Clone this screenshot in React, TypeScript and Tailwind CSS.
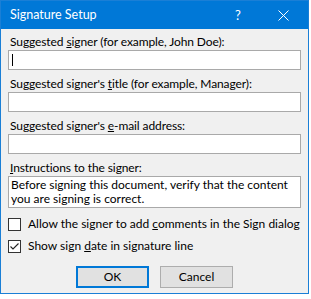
import React from "react";

const font = { fontFamily: 'Lato, "Noto Sans", sans-serif' };

function Label({ children }: { children: React.ReactNode }) {
  return <div className="text-[12px] leading-[14px] text-black pl-[2px] whitespace-nowrap tracking-[-0.1px]">{children}</div>;
}

function Field({ cursor = false }: { cursor?: boolean }) {
  return (
    <div className="mt-[1px] h-[20px] w-full border border-[#a9a9a9] bg-white relative">
      {cursor && <span className="absolute left-[3px] top-[3px] w-[1px] h-[12px] bg-black" />}
    </div>
  );
}

function Check({ checked }: { checked: boolean }) {
  return (
    <div className="w-[13px] h-[13px] border border-[#333333] bg-white flex items-center justify-center shrink-0">
      {checked && (
        <svg width="11" height="11" viewBox="0 0 11 11">
          <path d="M1.5 5.5 L4 8 L9.5 2.5" stroke="#222" strokeWidth="1.1" fill="none" />
        </svg>
      )}
    </div>
  );
}

export default function App() {
  return (
    <div className="w-[311px] h-[299px] bg-white" style={font}>
      <div className="w-[309px] h-[294px] border border-[#1a7fd6] bg-[#f0f0f0] flex flex-col">
        <div className="h-[28px] bg-[#0078d7] flex items-center text-white shrink-0">
          <div className="pl-[9px] text-[12.5px] leading-[16px] mt-[-1px] flex-1">Signature Setup</div>
          <div className="w-[14px] text-[13px] leading-[16px] mr-[33px] mt-[-1px] text-center">?</div>
          <svg width="11" height="11" viewBox="0 0 11 11" className="mr-[19px]">
            <path d="M0.5 0.5 L10.5 10.5 M10.5 0.5 L0.5 10.5" stroke="white" strokeWidth="1" />
          </svg>
        </div>
        <div className="flex-1 px-[7px] pt-[6px] flex flex-col">
          <Label>
            Suggested <span className="underline">s</span>igner (for example, John Doe):
          </Label>
          <Field cursor />
          <div className="mt-[7px]">
            <Label>
              Suggested signer's <span className="underline">t</span>itle (for example, Manager):
            </Label>
            <Field />
          </div>
          <div className="mt-[7px]">
            <Label>
              Suggested signer's <span className="underline">e</span>-mail address:
            </Label>
            <Field />
          </div>
          <div className="mt-[7px]">
            <Label>
              <span className="underline">I</span>nstructions to the signer:
            </Label>
            <div className="mt-[1px] h-[32px] w-full border border-[#a9a9a9] bg-white px-[2px] pt-[1px] text-[12px] leading-[14px] text-black">
              Before signing this document, verify that the content you are signing is correct.
            </div>
          </div>
          <div className="mt-[8px] flex items-center gap-[7px] h-[16px]">
            <Check checked={false} />
            <span className="text-[12px] leading-[16px] whitespace-nowrap">
              Allow the signer to add <span className="underline">c</span>omments in the Sign dialog
            </span>
          </div>
          <div className="mt-[6px] flex items-center gap-[7px] h-[16px]">
            <Check checked />
            <span className="text-[12px] leading-[16px] whitespace-nowrap">
              Show sign <span className="underline">d</span>ate in signature line
            </span>
          </div>
          <div className="mt-[12px] flex justify-center gap-[11px]">
            <div className="w-[73px] h-[22px] border-2 border-[#0078d7] bg-[#e1e1e1] flex items-center justify-center text-[12px]">
              OK
            </div>
            <div className="w-[73px] h-[22px] border border-[#adadad] bg-[#e1e1e1] flex items-center justify-center text-[12px]">
              Cancel
            </div>
          </div>
        </div>
      </div>
    </div>
  );
}
